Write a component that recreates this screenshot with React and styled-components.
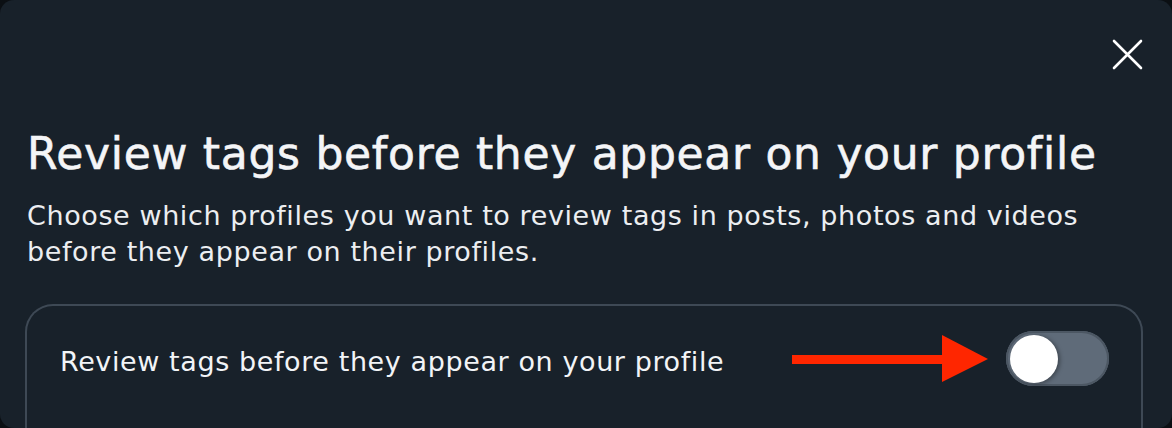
import React from "react";
import styled, { createGlobalStyle } from "styled-components";

const Global = createGlobalStyle`
  html, body { margin: 0; padding: 0; background: #0b0f13; }
  body { font-family: "DejaVu Sans", "Noto Sans", sans-serif; }
  * { box-sizing: border-box; }
`;

const Modal = styled.div`
  width: 1172px;
  height: 428px;
  overflow: hidden;
  background: #18212a;
  border-radius: 14px;
  padding: 39px 29px 0 27px;
  display: flex;
  flex-direction: column;
  color: #f2f4f7;
`;

const Header = styled.div`
  display: flex;
  justify-content: flex-end;
  height: 31px;
`;

const CloseButton = styled.button`
  width: 31px;
  height: 31px;
  padding: 0;
  border: none;
  background: none;
  color: #ffffff;
  display: flex;
  cursor: pointer;
`;

const Title = styled.h1`
  margin: 58px 0 0;
  font-size: 44px;
  line-height: 52px;
  font-weight: 400;
  -webkit-text-stroke: 0.6px #f4f5f7;
  letter-spacing: 0.7px;
  color: #f4f5f7;
`;

const Subtitle = styled.p`
  margin: 18px 0 0;
  font-size: 27px;
  line-height: 36px;
  font-weight: 400;
  letter-spacing: 0.6px;
  color: #eceef1;
`;

const Card = styled.div`
  margin: 34px 0 0 -2px;
  border: 2px solid #3e4955;
  border-radius: 28px;
  flex: 1;
  border-bottom: none;
  border-bottom-left-radius: 0;
  border-bottom-right-radius: 0;
  padding: 25px 32px 0 33px;
`;

const Row = styled.div`
  display: flex;
  align-items: center;
  height: 55px;
`;

const RowLabel = styled.span`
  flex: 1;
  padding-top: 6px;
  font-size: 27px;
  font-weight: 400;
  letter-spacing: 0.6px;
  color: #f2f4f7;
`;

const Arrow = styled.svg`
  width: 196px;
  height: 48px;
  margin-right: 18px;
  display: block;
`;

const Toggle = styled.div`
  width: 103px;
  height: 55px;
  border-radius: 28px;
  background: #5f6b79;
  box-shadow: inset 0 0 0 2px #4c5763;
  padding: 4px;
  display: flex;
  align-items: center;
  justify-content: ${(p) => (p.$on ? "flex-end" : "flex-start")};
`;

const Knob = styled.div`
  width: 48px;
  height: 48px;
  border-radius: 50%;
  background: #ffffff;
  box-shadow: 2px 1px 4px rgba(0, 0, 0, 0.35);
`;

export default function App() {
  return (
    <>
      <Global />
      <Modal>
        <Header>
          <CloseButton aria-label="Close">
            <svg width="31" height="31" viewBox="0 0 31 31">
              <path
                d="M2 2 L29 29 M29 2 L2 29"
                stroke="currentColor"
                strokeWidth="2.6"
                strokeLinecap="round"
              />
            </svg>
          </CloseButton>
        </Header>
        <Title>Review tags before they appear on your profile</Title>
        <Subtitle>
          Choose which profiles you want to review tags in posts, photos and videos
          <br />
          before they appear on their profiles.
        </Subtitle>
        <Card>
          <Row>
            <RowLabel>Review tags before they appear on your profile</RowLabel>
            <Arrow viewBox="0 0 196 48">
              <rect x="0" y="20" width="152" height="9" fill="#ff2600" />
              <polygon points="150,0 196,24 150,47" fill="#ff2600" />
            </Arrow>
            <Toggle $on={false}>
              <Knob />
            </Toggle>
          </Row>
        </Card>
      </Modal>
    </>
  );
}
